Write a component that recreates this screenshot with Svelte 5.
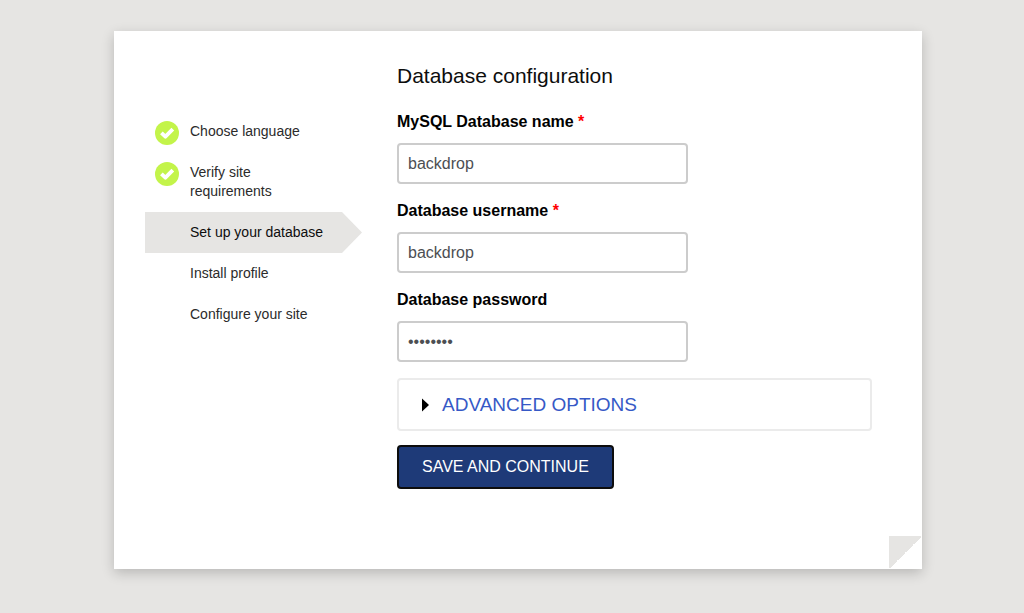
<script>
    const steps = [
        { label: 'Choose language', state: 'done' },
        { label: 'Verify site requirements', state: 'done' },
        { label: 'Set up your database', state: 'active' },
        { label: 'Install profile', state: 'todo' },
        { label: 'Configure your site', state: 'todo' },
    ];

    let name = 'backdrop';
    let username = 'backdrop';
    let password = 'password';

    function handleSubmit(e) {
        e.preventDefault();
    }
</script>

<div class="page">
    <aside>
        <ol class="steps">
            {#each steps as step}
                <li class={step.state} aria-current={step.state === 'active' ? 'step' : undefined}>
                    {#if step.state === 'done'}
                        <svg class="check" viewBox="0 0 24 24" aria-hidden="true">
                            <circle cx="12" cy="12" r="12" />
                            <path d="M6.4 11.8l4 3.9 7.4-7.5" />
                        </svg>
                    {/if}
                    <span>{step.label}</span>
                </li>
            {/each}
        </ol>
    </aside>

    <main>
        <h1>Database configuration</h1>
        <form on:submit={handleSubmit}>
            <div class="field">
                <label for="db-name">MySQL Database name <span class="required">*</span></label>
                <input id="db-name" type="text" bind:value={name} required />
            </div>
            <div class="field">
                <label for="db-user">Database username <span class="required">*</span></label>
                <input id="db-user" type="text" bind:value={username} required />
            </div>
            <div class="field">
                <label for="db-pass">Database password</label>
                <input id="db-pass" type="password" bind:value={password} />
            </div>
            <details>
                <summary>
                    <svg class="arrow" viewBox="0 0 7 14" aria-hidden="true">
                        <path d="M0 0.5l7 6.5-7 6.5z" />
                    </svg>
                    <span>Advanced options</span>
                </summary>
            </details>
            <button type="submit">Save and continue</button>
        </form>
    </main>

    <div class="fold"></div>
</div>

<style>
    :global(body) {
        background: #e6e5e3;
        font-family: "Liberation Sans", Arial, sans-serif;
        font-size: 16px;
        color: #0d0d0d;
    }

    .page {
        position: relative;
        display: flex;
        gap: 35px;
        margin: 31px 102px 44px 114px;
        padding: 31px 50px 80px 31px;
        background: #fff;
        box-shadow: 0 4px 12px rgba(0, 0, 0, 0.2);
    }

    aside {
        flex: 0 0 217px;
    }

    .steps {
        list-style: none;
        margin: 0;
        padding: 49px 0 0;
        font-size: 14px;
        line-height: 19px;
        color: #2b2b2b;
    }

    .steps li {
        display: flex;
        padding: 11px 50px 11px 45px;
    }

    .steps .done {
        gap: 11px;
        padding-left: 10px;
    }

    .steps .active {
        padding-right: 20px;
        background: #e6e5e3;
        color: #0d0d0d;
        clip-path: polygon(0 0, calc(100% - 20px) 0, 100% 50%, calc(100% - 20px) 100%, 0 100%);
    }

    .check {
        flex: none;
        width: 24px;
        height: 24px;
        margin: -1px 0 -4px;
    }

    .check circle {
        fill: #c3f44a;
    }

    .check path {
        fill: none;
        stroke: #fff;
        stroke-width: 3.8;
        stroke-linejoin: round;
    }

    main {
        flex: 1;
        min-width: 0;
    }

    h1 {
        margin: 0 0 21px;
        font-size: 21px;
        font-weight: normal;
        line-height: 28px;
    }

    .field {
        margin-bottom: 16px;
    }

    label {
        display: block;
        margin-bottom: 10px;
        font-weight: bold;
        line-height: 22px;
        color: #000;
    }

    .required {
        color: #f00;
    }

    input {
        display: block;
        box-sizing: border-box;
        width: 100%;
        max-width: 291px;
        height: 41px;
        padding: 0 9px;
        border: 2px solid #ccc;
        border-radius: 4px;
        background: #fff;
        font: inherit;
        color: #4d4f53;
    }

    details {
        margin-bottom: 14px;
        border: 2px solid #ebebeb;
        border-radius: 4px;
    }

    summary {
        display: flex;
        align-items: center;
        gap: 13px;
        padding: 13px 23px;
        font-size: 19px;
        line-height: 23px;
        text-transform: uppercase;
        color: #3659c6;
        cursor: pointer;
    }

    .arrow {
        width: 7px;
        height: 14px;
        fill: #000;
    }

    details[open] .arrow {
        transform: rotate(90deg);
    }

    button {
        height: 44px;
        padding: 0 23px;
        border: 2px solid #0d0d0d;
        border-radius: 4px;
        background: #1e3a78;
        font: inherit;
        text-transform: uppercase;
        color: #fff;
        cursor: pointer;
    }

    .fold {
        position: absolute;
        right: 0;
        bottom: 0;
        width: 33px;
        height: 33px;
        background: linear-gradient(135deg, #e6e5e3 50%, #fff 50%);
    }
</style>
